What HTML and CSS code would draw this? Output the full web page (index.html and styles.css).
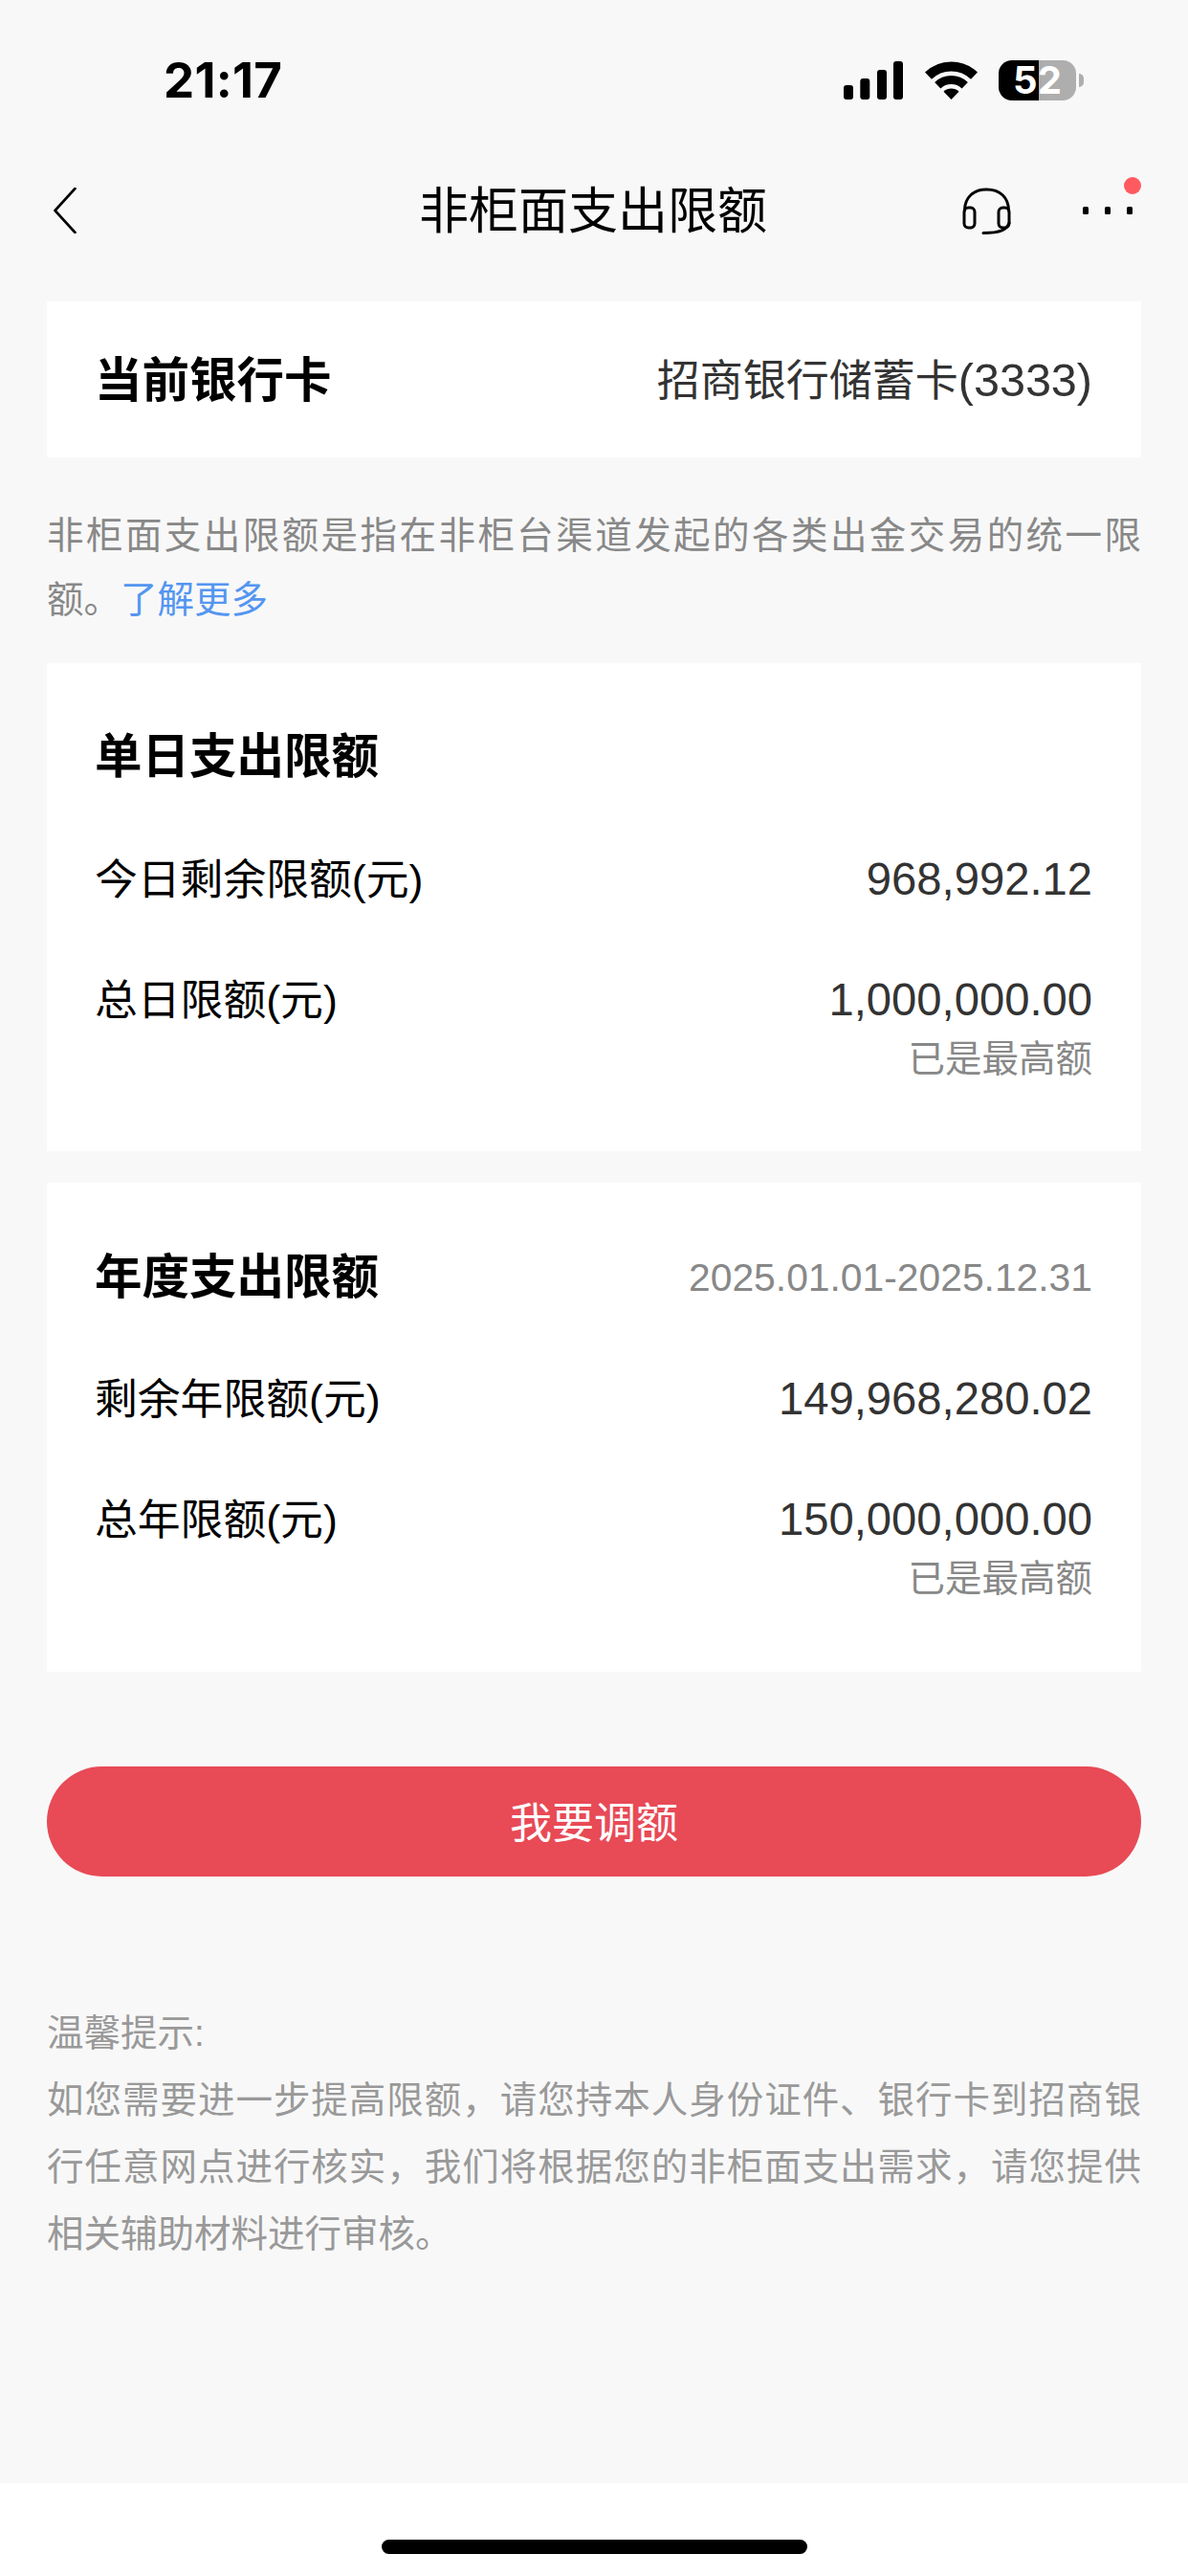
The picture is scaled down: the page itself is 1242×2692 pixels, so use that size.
FILE: index.html
```html
<!DOCTYPE html>
<html lang="zh-CN">
<head>
<meta charset="utf-8">
<title>非柜面支出限额</title>
<link rel="stylesheet" href="styles.css">
</head>
<body>
<div class="screen">
  <header class="status">
    <span class="time">21:17</span>
    <div class="status-icons">
      <svg class="signal" width="62" height="40" viewBox="0 0 62 40"><rect x="0" y="25" width="10" height="15" rx="3"/><rect x="17.300" y="18" width="10" height="22" rx="3"/><rect x="35" y="9" width="10" height="31" rx="3"/><rect x="52" y="0" width="10" height="40" rx="3"/></svg>
      <svg class="wifi" width="55" height="40" viewBox="0 0 55 40"><path class="wifi-arc wifi-outer" d="M3.500 15.200A34.500 34.500 0 0 1 51.500 15.200"/><path class="wifi-arc wifi-mid" d="M13.250 25.300A20.500 20.500 0 0 1 41.750 25.300"/><path class="wifi-core" d="M27.500 40L19.500 31.700A11.500 11.500 0 0 1 35.500 31.700Z"/></svg>
      <div class="battery"><div class="battery-body">52</div><span class="battery-nub"></span></div>
    </div>
  </header>
  <nav class="nav">
    <div class="nav-left">
      <svg class="icon-line icon-back" width="24" height="48" viewBox="0 0 24 48"><path d="M22.500 1L1.500 24L22.500 47"/></svg>
    </div>
    <h1 class="nav-title">非柜面支出限额</h1>
    <div class="nav-right">
      <svg class="icon-line" width="51" height="49" viewBox="0 0 51 49"><path d="M2.500 24C2.500 10 12 2 25.500 2C39 2 48.500 10 48.500 24"/><rect x="2" y="21" width="11" height="21" rx="4.500"/><rect x="38" y="21" width="11" height="21" rx="4.500"/><path d="M49 37C46.500 44 40 47.500 22 47.500"/></svg>
      <div class="more">
        <span class="dot"></span><span class="dot"></span><span class="dot"></span>
        <span class="badge"></span>
      </div>
    </div>
  </nav>
  <main class="content">
    <section class="card card-bank">
      <span class="card-title">当前银行卡</span>
      <span class="bank-name">招商银行储蓄卡<span class="bank-no">(3333)</span></span>
    </section>
    <p class="note">非柜面支出限额是指在非柜台渠道发起的各类出金交易的统一限额。<a class="link">了解更多</a></p>
    <section class="card card-limit">
      <div class="row row-title"><span class="card-title">单日支出限额</span></div>
      <div class="row"><span class="label">今日剩余限额(元)</span><span class="amount">968,992.12</span></div>
      <div class="row"><span class="label">总日限额(元)</span><span class="amount">1,000,000.00</span></div>
      <div class="hint">已是最高额</div>
    </section>
    <section class="card card-limit card-year">
      <div class="row row-title"><span class="card-title">年度支出限额</span><span class="period">2025.01.01-2025.12.31</span></div>
      <div class="row"><span class="label">剩余年限额(元)</span><span class="amount">149,968,280.02</span></div>
      <div class="row"><span class="label">总年限额(元)</span><span class="amount">150,000,000.00</span></div>
      <div class="hint">已是最高额</div>
    </section>
    <button class="cta" type="button">我要调额</button>
    <div class="tips">
      <p class="tips-head">温馨提示:</p>
      <p class="tips-body">如您需要进一步提高限额，请您持本人身份证件、银行卡到招商银行任意网点进行核实，我们将根据您的非柜面支出需求，请您提供相关辅助材料进行审核。</p>
    </div>
  </main>
  <footer class="home"><span class="home-bar"></span></footer>
</div>
</body>
</html>
```
FILE: styles.css
```css
* { box-sizing: border-box; }
html, body { margin: 0; padding: 0; }
body {
  background: #f8f8f8;
  font-family: "Liberation Sans", "Noto Sans CJK SC", sans-serif;
  color: #000;
}
.screen {
  width: 1242px;
  height: 2692px;
  display: flex;
  flex-direction: column;
  overflow: hidden;
}
.status {
  height: 168px;
  flex: none;
  display: flex;
  align-items: center;
  justify-content: space-between;
  padding: 0 109px 0 171px;
}
.time {
  font-family: Inter, "Liberation Sans", sans-serif;
  font-weight: 700;
  font-size: 51px;
  letter-spacing: 0.300px;
  line-height: 60px;
  color: #000;
}
.status-icons { display: flex; align-items: center; gap: 22px; }
.signal { display: block; fill: #000; }
.wifi { display: block; margin-left: 1px; }
.wifi-arc { fill: none; stroke: #000; }
.wifi-outer { stroke-width: 10; }
.wifi-mid { stroke-width: 9; }
.wifi-core { fill: #000; }
.battery { display: flex; align-items: center; gap: 3px; }
.battery-body {
  width: 81px;
  height: 42px;
  border-radius: 14px;
  background: linear-gradient(90deg, #000 0, #000 42px, #aeaeae 42px, #aeaeae 100%);
  color: #fff;
  font-family: Inter, "Liberation Sans", sans-serif;
  font-weight: 700;
  font-size: 40px;
  line-height: 42px;
  text-align: center;
}
.battery-nub {
  width: 5px;
  height: 14px;
  background: #aeaeae;
  border-radius: 0 5px 5px 0;
}
.nav {
  height: 104px;
  flex: none;
  display: grid;
  grid-template-columns: 1fr auto 1fr;
  align-items: center;
  padding: 0 58px 0 56px;
}
.nav-left { display: flex; align-items: center; }
.nav-title {
  margin: 0;
  padding-top: 2px;
  font-size: 52px;
  font-weight: 400;
  line-height: 70px;
  color: #000;
}
.nav-right {
  display: flex;
  align-items: center;
  justify-content: flex-end;
  gap: 75px;
}
.icon-line {
  display: block;
  fill: none;
  stroke: #000;
  stroke-width: 3;
  stroke-linecap: round;
  stroke-linejoin: round;
}
.icon-back { stroke-width: 2.600; }
.more {
  position: relative;
  display: flex;
  align-items: center;
  gap: 17px;
}
.dot {
  width: 6px;
  height: 8px;
  background: #000;
  border-radius: 1.500px;
}
.badge {
  position: absolute;
  right: -9px;
  top: -31px;
  width: 18px;
  height: 18px;
  border-radius: 50%;
  background: #ff5a5f;
}
.content {
  flex: 1;
  padding: 43px 49px 0;
}
.card { background: #fff; }
.card-bank {
  height: 163px;
  display: flex;
  align-items: center;
  justify-content: space-between;
  padding: 2px 51px 0 50px;
}
.card-title {
  font-size: 49.500px;
  font-weight: 700;
  line-height: 60px;
  color: #000;
}
.bank-name {
  font-size: 45px;
  line-height: 60px;
  color: #333;
}
.bank-no { font-size: 48.500px; }
.note {
  margin: 48px 0 33px;
  font-size: 38.500px;
  line-height: 67px;
  color: #888;
  text-align: justify;
}
.link { color: #5496f0; }
.card-limit {
  height: 510px;
  padding: 68px 51px 0 50px;
}
.card-year { height: 511px; margin-top: 33px; }
.card-year .row-title { padding-top: 2px; }
.row {
  display: flex;
  align-items: center;
  justify-content: space-between;
  height: 60px;
  margin-top: 66px;
}
.row-title { margin-top: 0; }
.row-title + .row { margin-top: 67px; }
.label {
  padding-top: 2px;
  font-size: 44.800px;
  line-height: 60px;
  color: #000;
}
.amount {
  padding-top: 1px;
  font-size: 47.200px;
  line-height: 60px;
  color: #333;
}
.period {
  font-size: 40.800px;
  line-height: 60px;
  color: #888;
}
.hint {
  margin-top: 8px;
  font-size: 38.500px;
  line-height: 50px;
  color: #888;
  text-align: right;
}
.cta {
  display: block;
  width: 100%;
  height: 115px;
  margin: 99px 0 0;
  padding: 0 0 3px;
  border: 0;
  border-radius: 58px;
  background: #e84a56;
  color: #fff;
  font-family: inherit;
  font-size: 44px;
}
.tips {
  margin-top: 129px;
  color: #999;
  font-size: 38.500px;
  line-height: 70px;
}
.tips p { margin: 0; }
.tips-body { text-align: justify; }
.home {
  height: 97px;
  flex: none;
  background: #fff;
  display: flex;
  justify-content: center;
  padding-top: 59px;
}
.home-bar {
  width: 445px;
  height: 15px;
  border-radius: 8px;
  background: #000;
}
```
